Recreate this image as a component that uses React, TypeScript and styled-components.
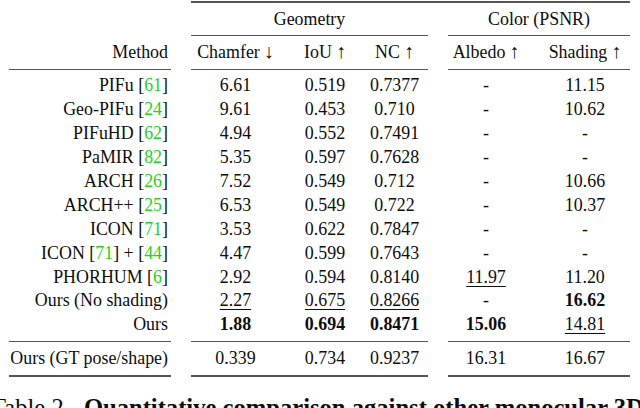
import styled, { createGlobalStyle } from 'styled-components';

const GlobalStyle = createGlobalStyle`
  html, body {
    margin: 0;
    padding: 0;
    background: #fff;
    overflow: hidden;
  }
`;

const Page = styled.div`
  width: 640px;
  height: 408px;
  overflow: hidden;
  padding-top: 1px;
  box-sizing: border-box;
  font-family: "Liberation Serif", "Times New Roman", serif;
  color: #0d0d0d;
`;

const Table = styled.div`
  display: grid;
  grid-template-columns: 162px 20px 89px 90px 58px 20px 76px 106px;
  margin-left: 9px;
  font-size: 17.9px;
  line-height: 23.9px;
`;

// $nudge moves the centred content: > 0 pads the left side, < 0 the right side
const Cell = styled.div<{ $col: number; $span?: number; $right?: boolean; $nudge?: number }>`
  grid-column: ${(p) => p.$col} / span ${(p) => p.$span ?? 1};
  text-align: ${(p) => (p.$right ? 'right' : 'center')};
  padding-left: ${(p) => Math.max(p.$nudge ?? 0, 0)}px;
  padding-right: ${(p) => (p.$right ? 3 : Math.max(-(p.$nudge ?? 0), 0))}px;
  white-space: nowrap;
`;

const Rule = styled.div<{ $col: number; $span: number; $heavy?: boolean; $first?: boolean }>`
  grid-column: ${(p) => p.$col} / span ${(p) => p.$span};
  height: ${(p) => (p.$heavy ? '2px' : '1px')};
  background: #555;
  margin: ${(p) => (p.$first ? '0' : '4px')} 0 4.5px;
`;

const Arrow = styled.span`
  margin-left: 4px;
  font-size: 1.12em;
  line-height: 0;
`;

const Ref = styled.span`
  color: #1fd21f;
`;

const Under = styled.span`
  text-decoration: underline;
  text-decoration-thickness: 1px;
  text-underline-offset: 3px;
`;

const Caption = styled.div`
  margin: 13px 0 0 -9px;
  font-size: 24.6px;
  line-height: 28px;
  white-space: nowrap;
  b {
    margin-left: 14px;
  }
`;

const rows: [string, string[]][] = [
  ['PIFu [61]', ['6.61', '0.519', '0.7377', '-', '11.15']],
  ['Geo-PIFu [24]', ['9.61', '0.453', '0.710', '-', '10.62']],
  ['PIFuHD [62]', ['4.94', '0.552', '0.7491', '-', '-']],
  ['PaMIR [82]', ['5.35', '0.597', '0.7628', '-', '-']],
  ['ARCH [26]', ['7.52', '0.549', '0.712', '-', '10.66']],
  ['ARCH++ [25]', ['6.53', '0.549', '0.722', '-', '10.37']],
  ['ICON [71]', ['3.53', '0.622', '0.7847', '-', '-']],
  ['ICON [71] + [44]', ['4.47', '0.599', '0.7643', '-', '-']],
  ['PHORHUM [6]', ['2.92', '0.594', '0.8140', '_11.97', '11.20']],
  ['Ours (No shading)', ['_2.27', '_0.675', '_0.8266', '-', '*16.62']],
  ['Ours', ['*1.88', '*0.694', '*0.8471', '*15.06', '_14.81']],
];

const gtRow: [string, string[]] = ['Ours (GT pose/shape)', ['0.339', '0.734', '0.9237', '16.31', '16.67']];

// value columns in the grid (col 2 and 6 are the gaps between groups)
const valueCols = [3, 4, 5, 7, 8];
const nudges = [0, 0, -9, 0, 16];

const headers: [string, string][] = [
  ['Chamfer', '↓'],
  ['IoU', '↑'],
  ['NC', '↑'],
  ['Albedo', '↑'],
  ['Shading', '↑'],
];

const Method = ({ text }: { text: string }) => (
  <>
    {text.split(/\[(\d+)\]/).map((part, i) =>
      i % 2 === 1 ? (
        <span key={i}>
          [<Ref>{part}</Ref>]
        </span>
      ) : (
        <span key={i}>{part}</span>
      )
    )}
  </>
);

const Value = ({ v }: { v: string }) => {
  if (v.startsWith('_')) return <Under>{v.slice(1)}</Under>;
  if (v.startsWith('*')) return <b>{v.slice(1)}</b>;
  return <>{v}</>;
};

const Row = ({ row }: { row: [string, string[]] }) => (
  <>
    <Cell $col={1} $right>
      <Method text={row[0]} />
    </Cell>
    {row[1].map((v, i) => (
      <Cell key={i} $col={valueCols[i]} $nudge={nudges[i]}>
        <Value v={v} />
      </Cell>
    ))}
  </>
);

const SplitRule = ({ heavy, method = true }: { heavy?: boolean; method?: boolean }) => (
  <>
    {method && <Rule $col={1} $span={1} $heavy={heavy} />}
    <Rule $col={3} $span={3} $heavy={heavy} />
    <Rule $col={7} $span={2} $heavy={heavy} />
  </>
);

const App = () => (
  <Page>
    <GlobalStyle />
    <Table>
      <Rule $col={3} $span={6} $heavy $first />
      <Cell $col={3} $span={3}>Geometry</Cell>
      <Cell $col={7} $span={2}>Color (PSNR)</Cell>
      <SplitRule method={false} />
      <Cell $col={1} $right>Method</Cell>
      {headers.map(([label, arrow], i) => (
        <Cell key={label} $col={valueCols[i]} $nudge={nudges[i]}>
          {label}
          <Arrow>{arrow}</Arrow>
        </Cell>
      ))}
      <SplitRule />
      {rows.map((r) => (
        <Row key={r[0]} row={r} />
      ))}
      <SplitRule />
      <Row row={gtRow} />
      <SplitRule heavy />
    </Table>
    <Caption>
      Table 2.<b>Quantitative comparison against other monocular 3D human reconstruction methods.</b>
    </Caption>
  </Page>
);

export default App;
